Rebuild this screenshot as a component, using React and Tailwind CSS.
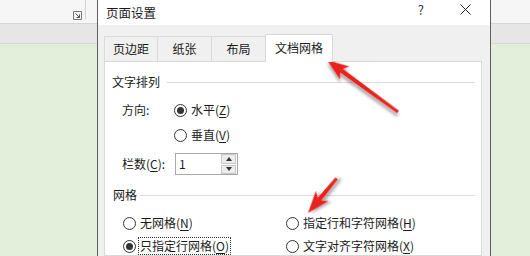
import React from 'react';

const Radio = ({ checked }) => (
    <span className="w-[13px] h-[13px] rounded-full border border-[#333333] bg-white flex items-center justify-center shrink-0">
        {checked && <span className="w-[7px] h-[7px] rounded-full bg-[#333333]"></span>}
    </span>
);

const Key = ({ children }) => <span className="underline underline-offset-2">{children}</span>;

const Arrow = ({ x, y, angle, len }) => (
    <g transform={`translate(${x} ${y}) rotate(${angle})`} filter="url(#shadow)">
        <polygon
            points={`0,0 22,-8 18,-2.2 ${len},-1.4 ${len},1.4 18,2.2 22,8`}
            fill="#e8231c"
        />
    </g>
);

export default function App() {
    return (
        <div className="relative w-[530px] h-[256px] overflow-hidden flex bg-[#e3efdb] text-[12px] text-[#1a1a1a] font-['Noto_Sans_CJK_SC',sans-serif]">
            {/* left background: ribbon / ruler / page */}
            <div className="w-[97px] shrink-0 flex flex-col">
                <div className="h-[24px] bg-[#f6f6f6] border-b border-[#d6d6d6] flex items-start">
                    <div className="flex-1"></div>
                    <div className="w-[12px] h-[24px] pt-[11px]">
                        <svg width="9" height="9" viewBox="0 0 9 9">
                            <path d="M0.5 0.5 H8.5 V8.5 H0.5 Z" fill="none" stroke="#777" strokeWidth="1" />
                            <path d="M2.5 2.5 L6.5 6.5 M6.5 3.5 V6.5 H3.5" fill="none" stroke="#555" strokeWidth="1" />
                        </svg>
                    </div>
                    <div className="w-px h-[19px] bg-[#d2d2d2]"></div>
                    <div className="w-[11px]"></div>
                </div>
                <div className="h-[20px] bg-[#e6e6e6] border-b border-[#d9d9d9]"></div>
                <div className="flex-1 bg-[#e3efdb]"></div>
            </div>

            {/* dialog */}
            <div className="w-[394px] shrink-0 border-l border-r border-[#5f5f5f] bg-[#f0f0f0] flex flex-col">
                <div className="h-[25px] bg-white flex items-center pl-[8px] pr-[19px]">
                    <span className="leading-[16px] text-[12.5px]">页面设置</span>
                    <span className="flex-1"></span>
                    <span className="text-[13px] leading-[16px] text-[#333] mb-[6px]">?</span>
                    <span className="w-[36px]"></span>
                    <svg width="11" height="11" viewBox="0 0 11 11" className="mb-[6px]">
                        <path d="M0.5 0.5 L10.5 10.5 M10.5 0.5 L0.5 10.5" stroke="#222" strokeWidth="1" />
                    </svg>
                </div>

                {/* tabs */}
                <div className="flex items-end ml-[6px] mt-[9px] h-[27px]">
                    <div className="w-[53px] h-[25px] border-l border-t border-[#d9d9d9] flex items-center justify-center leading-[16px]">页边距</div>
                    <div className="w-[54px] h-[25px] border-l border-t border-[#d9d9d9] flex items-center justify-center leading-[16px]">纸张</div>
                    <div className="w-[54px] h-[25px] border-l border-t border-[#d9d9d9] flex items-center justify-center leading-[16px]">布局</div>
                    <div className="relative z-10 w-[68px] h-[28px] -mb-px bg-white border-l border-t border-r border-[#d9d9d9] flex items-center justify-center leading-[16px] pb-[2px]">文档网格</div>
                </div>

                {/* panel */}
                <div className="ml-[6px] w-[378px] flex-1 bg-white border border-[#d9d9d9] pl-[7px] pr-[6px] pt-[11px] flex flex-col">
                    <div className="h-[18px] flex items-center">
                        <span className="leading-[16px]">文字排列</span>
                        <span className="flex-1 ml-[7px] h-px bg-[#dcdcdc]"></span>
                    </div>

                    <div className="mt-[10px] h-[18px] flex items-center pl-[10px]">
                        <span className="w-[52px] leading-[16px]">方向:</span>
                        <Radio checked />
                        <span className="ml-[4px] leading-[16px]">水平(<Key>Z</Key>)</span>
                    </div>

                    <div className="mt-[7px] h-[18px] flex items-center pl-[62px]">
                        <Radio />
                        <span className="ml-[4px] leading-[16px]">垂直(<Key>V</Key>)</span>
                    </div>

                    <div className="mt-[9px] h-[22px] flex items-center pl-[10px]">
                        <span className="w-[53px] leading-[16px]">栏数(<Key>C</Key>):</span>
                        <div className="w-[63px] h-[22px] border border-[#a9a9a9] bg-white flex items-center">
                            <span className="flex-1 pl-[3px] leading-[16px]">1</span>
                            <div className="w-[15px] h-[20px] mr-px flex flex-col gap-px">
                                <div className="flex-1 bg-[#ececec] border border-[#c8c8c8] flex items-center justify-center">
                                    <svg width="6" height="4" viewBox="0 0 6 4"><path d="M3 0 L6 4 H0 Z" fill="#333" /></svg>
                                </div>
                                <div className="flex-1 bg-[#ececec] border border-[#c8c8c8] flex items-center justify-center">
                                    <svg width="6" height="4" viewBox="0 0 6 4"><path d="M0 0 H6 L3 4 Z" fill="#333" /></svg>
                                </div>
                            </div>
                        </div>
                    </div>

                    <div className="mt-[11px] h-[18px] flex items-center pl-px">
                        <span className="leading-[16px]">网格</span>
                        <span className="flex-1 ml-[3px] h-px bg-[#dcdcdc]"></span>
                    </div>

                    <div className="mt-[10px] h-[18px] flex items-center pl-[11px]">
                        <div className="w-[163px] flex items-center">
                            <Radio />
                            <span className="ml-[4px] leading-[16px]">无网格(<Key>N</Key>)</span>
                        </div>
                        <div className="flex items-center">
                            <Radio />
                            <span className="ml-[4px] leading-[16px]">指定行和字符网格(<Key>H</Key>)</span>
                        </div>
                    </div>

                    <div className="mt-[5px] h-[18px] flex items-center pl-[11px]">
                        <div className="w-[163px] flex items-center">
                            <Radio checked />
                            <span className="ml-[2px] px-px leading-[16px] border border-dotted border-[#333]">只指定行网格(<Key>O</Key>)</span>
                        </div>
                        <div className="flex items-center">
                            <Radio />
                            <span className="ml-[4px] leading-[16px]">文字对齐字符网格(<Key>X</Key>)</span>
                        </div>
                    </div>
                </div>
            </div>

            {/* right background */}
            <div className="flex-1 flex flex-col">
                <div className="h-[24px] bg-[#f6f6f6] border-b border-[#d6d6d6]"></div>
                <div className="h-[20px] bg-[#e6e6e6] border-b border-[#d9d9d9]"></div>
                <div className="flex-1 bg-[#e3efdb]"></div>
            </div>

            {/* annotation arrows */}
            <svg className="absolute inset-0 pointer-events-none" width="530" height="256" viewBox="0 0 530 256">
                <defs>
                    <filter id="shadow" x="-20%" y="-20%" width="140%" height="140%">
                        <feDropShadow dx="2" dy="3" stdDeviation="1.6" floodColor="#000" floodOpacity="0.35" />
                    </filter>
                </defs>
                <Arrow x={327} y={60} angle={36.2} len={88} />
                <Arrow x={308} y={213} angle={-50.4} len={45} />
            </svg>
        </div>
    );
}
